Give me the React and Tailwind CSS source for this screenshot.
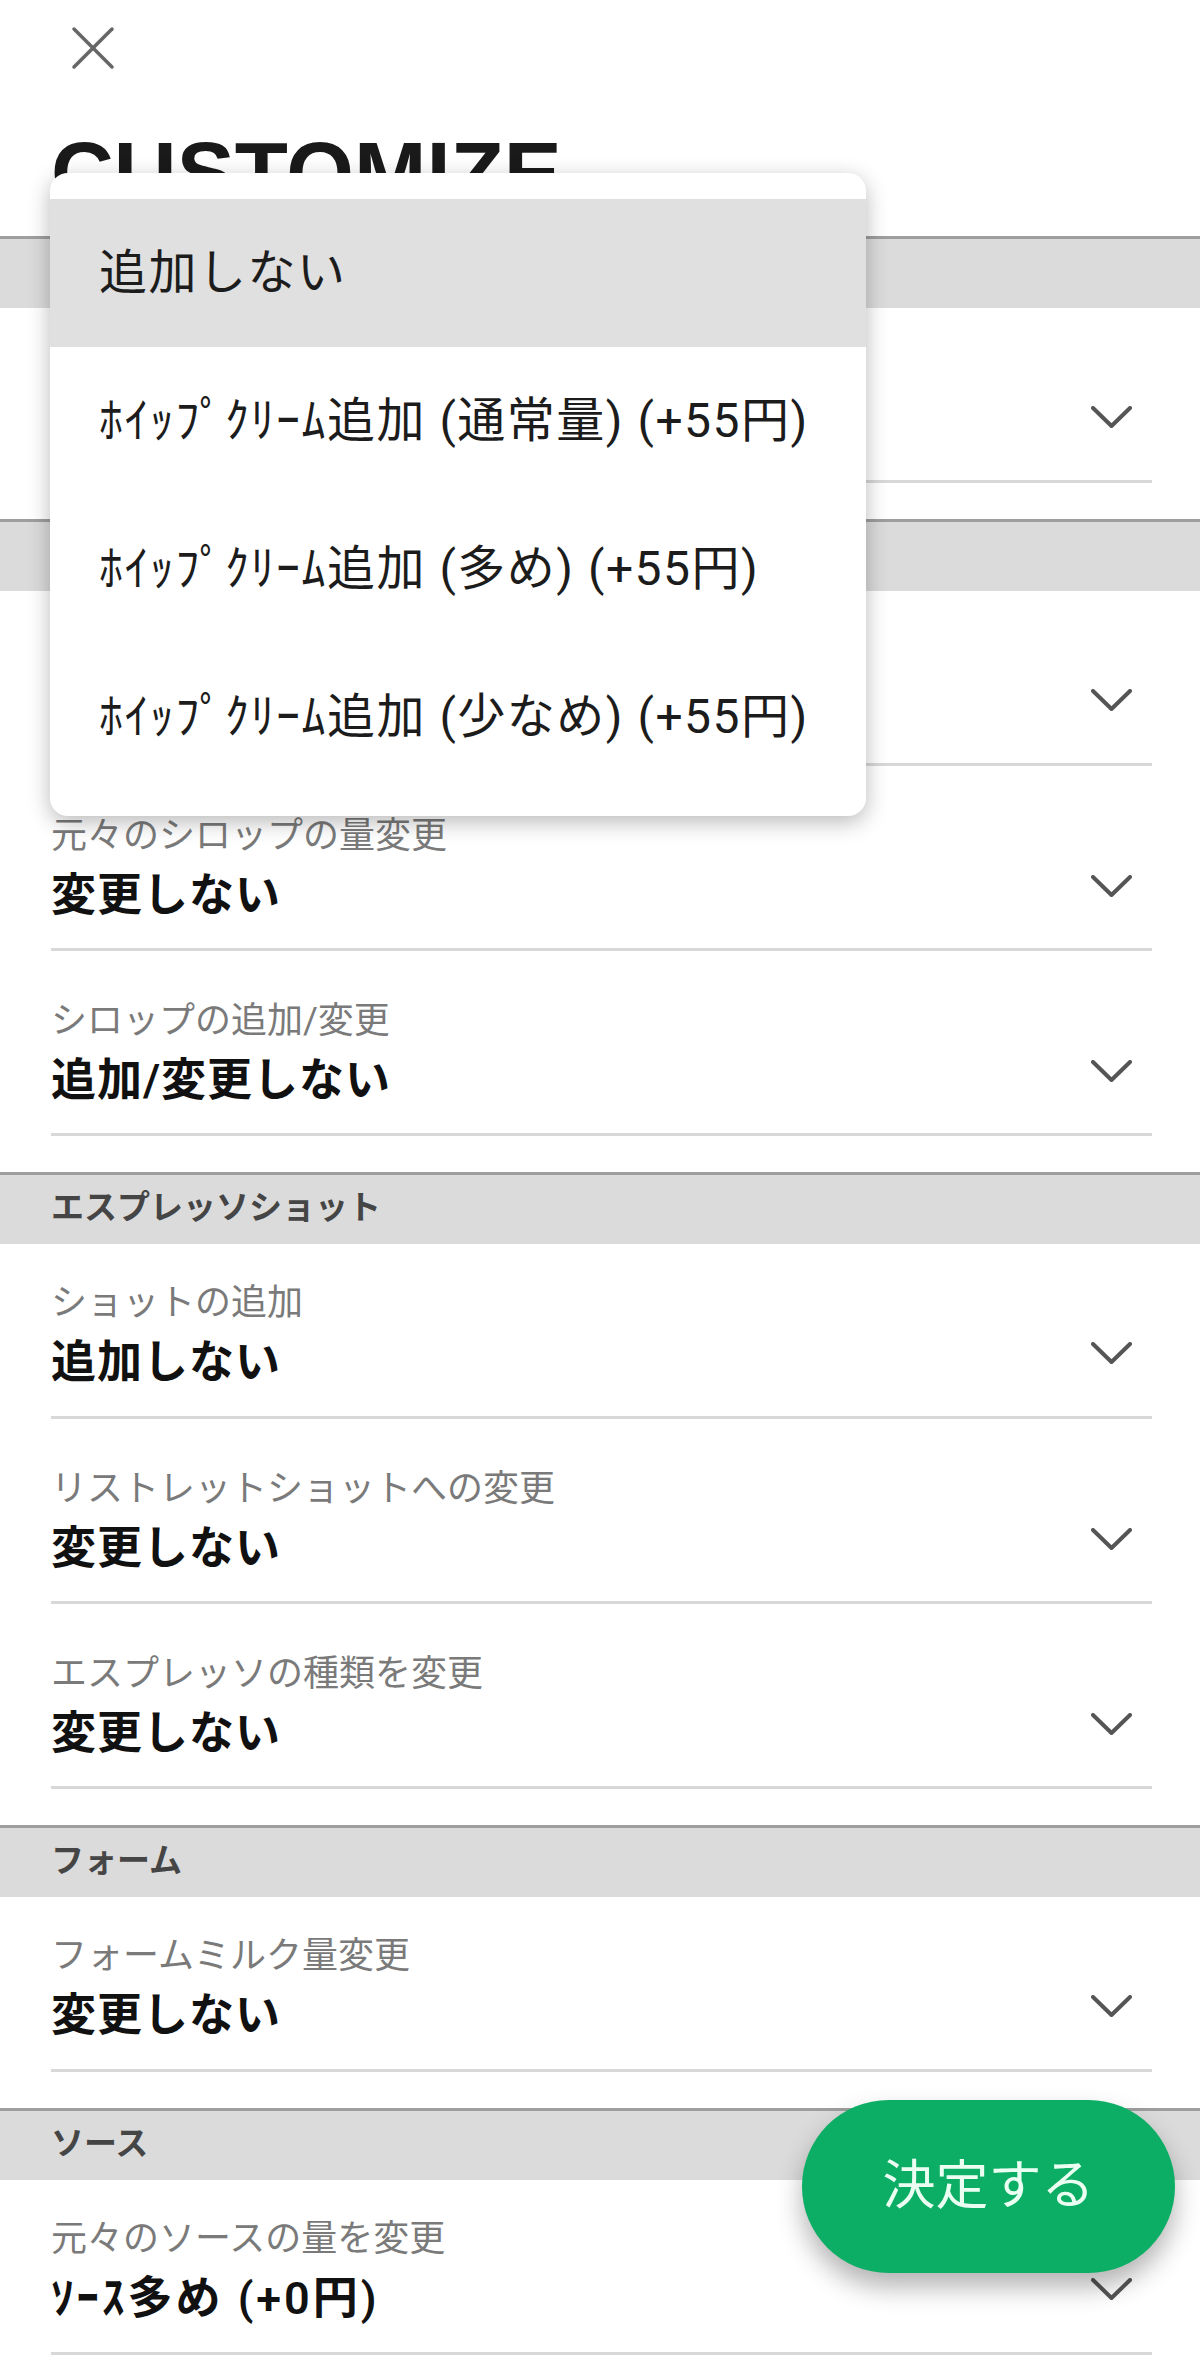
import React from 'react';

const sections = [
  {
    title: 'ホイップクリーム',
    rows: [{ label: 'ホイップクリームの追加', value: '追加しない' }],
  },
  {
    title: 'シロップ',
    rows: [
      { label: 'シロップの種類を変更', value: '変更しない' },
      { label: '元々のシロップの量変更', value: '変更しない' },
      { label: 'シロップの追加/変更', value: '追加/変更しない' },
    ],
  },
  {
    title: 'エスプレッソショット',
    rows: [
      { label: 'ショットの追加', value: '追加しない' },
      { label: 'リストレットショットへの変更', value: '変更しない' },
      { label: 'エスプレッソの種類を変更', value: '変更しない' },
    ],
  },
  {
    title: 'フォーム',
    rows: [{ label: 'フォームミルク量変更', value: '変更しない' }],
  },
  {
    title: 'ソース',
    rows: [{ label: '元々のソースの量を変更', value: 'ｿｰｽ多め (+0円)', wide: true }],
  },
];

const options = [
  '追加しない',
  'ﾎｲｯﾌﾟｸﾘｰﾑ追加 (通常量) (+55円)',
  'ﾎｲｯﾌﾟｸﾘｰﾑ追加 (多め) (+55円)',
  'ﾎｲｯﾌﾟｸﾘｰﾑ追加 (少なめ) (+55円)',
];

const font = { fontFamily: 'Roboto, "Noto Sans CJK JP", sans-serif' };

const Chevron = () => (
  <svg width="41" height="24" viewBox="0 0 41 24" fill="none" stroke="#555" strokeWidth="4" strokeLinecap="round" strokeLinejoin="round" className="mr-[20px] mb-[18px] shrink-0">
    <polyline points="2,2 20.5,20 39,2" />
  </svg>
);

const SelectRow = ({ label, value, first, wide }) => (
  <div className={`${first ? 'pt-[35px] pb-[21px]' : 'pt-[46px] pb-[20px]'} border-b-[3px] border-[#d8d8d8]`}>
    <div className="text-[36px] leading-[48px] text-[#7a7a7a]">{label}</div>
    <div className="mt-[4px] flex items-center justify-between">
      <span className={`text-[45px] leading-[64px] font-semibold text-[#111] ${wide ? 'tracking-[3px]' : 'tracking-[1px]'}`}>{value}</span>
      <Chevron />
    </div>
  </div>
);

export default function App() {
  return (
    <div className="relative w-[1200px] h-[2360px] overflow-hidden bg-white" style={font}>
      <div className="h-[236px] pl-[51px] pt-[26px]">
        <svg width="44" height="44" viewBox="0 0 44 44" stroke="#666" strokeWidth="3.5" strokeLinecap="round" className="ml-[20px]">
          <line x1="3" y1="3" x2="41" y2="41" />
          <line x1="41" y1="3" x2="3" y2="41" />
        </svg>
        <h1 className="mt-[59px] text-[87px] leading-none font-bold text-[#1a1a1a]" style={{ fontFamily: '"Liberation Sans", sans-serif' }}>
          CUSTOMIZE
        </h1>
      </div>

      {sections.map((s) => (
        <section key={s.title} className="pb-[36px]">
          <div className="h-[72px] border-t-[3px] border-[#9e9e9e] bg-[#dbdbdb] flex items-center pl-[51px] pb-[4px]">
            <span className="text-[33px] font-bold text-[#454545]">{s.title}</span>
          </div>
          <div className="pl-[51px] pr-[48px]">
            {s.rows.map((r, i) => (
              <SelectRow key={r.label} label={r.label} value={r.value} wide={r.wide} first={i === 0} />
            ))}
          </div>
        </section>
      ))}

      {/* open select menu */}
      <div className="absolute left-[50px] top-[173px] w-[816px] pt-[26px] pb-[25px] bg-white rounded-[18px] shadow-[0_6px_22px_rgba(0,0,0,0.28)]">
        {options.map((o, i) => (
          <div key={o} className={`h-[148px] flex items-center pl-[49px] text-[48px] tracking-[1.5px] text-[#1c1c1c] ${i === 0 ? 'bg-[#e0e0e0]' : ''}`}>
            {o}
          </div>
        ))}
      </div>

      <button className="absolute left-[802px] top-[2100px] w-[373px] h-[173px] rounded-full bg-[#0bae64] text-[53px] text-[#eafff2] shadow-[0_14px_26px_rgba(0,0,0,0.3)]">
        決定する
      </button>
    </div>
  );
}
